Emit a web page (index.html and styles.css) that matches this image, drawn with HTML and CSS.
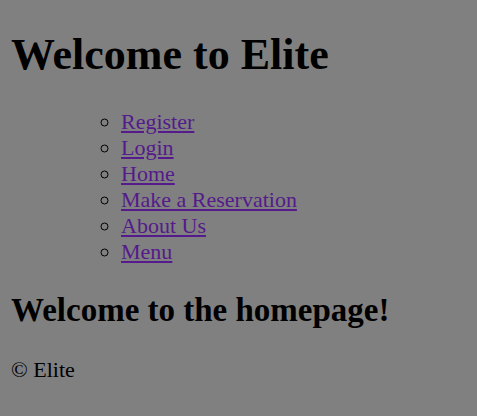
FILE: index.html
```html
<!DOCTYPE html>
<html>
<head>
<meta charset="utf-8">
<title>Elite</title>
<link rel="stylesheet" href="styles.css">
</head>
<body class="page">
<h1 class="title">Welcome to Elite</h1>
<ul class="nav">
  <ul class="nav-inner">
    <li><a href="#" class="link">Register</a></li>
    <li><a href="#" class="link">Login</a></li>
    <li><a href="#" class="link">Home</a></li>
    <li><a href="#" class="link">Make a Reservation</a></li>
    <li><a href="#" class="link">About Us</a></li>
    <li><a href="#" class="link">Menu</a></li>
  </ul>
</ul>
<h2 class="subtitle">Welcome to the homepage!</h2>
<p class="footer">© Elite</p>
</body>
</html>
```
FILE: styles.css
```css
html {
  background: #808080;
}
.page {
  margin: 11px;
  font-family: "Liberation Serif", "Times New Roman", serif;
  font-size: 22px;
  color: #000;
  background: #808080;
}
.title {
  font-size: 44px;
  font-weight: bold;
  margin: 17.5px 0 29.5px;
}
.nav {
  margin: 22px 0;
  padding-left: 55px;
  list-style: circle;
}
.nav-inner {
  margin: 0;
  padding-left: 55px;
  list-style: circle;
}
.link {
  color: #551a8b;
}
.subtitle {
  font-size: 33px;
  font-weight: bold;
  margin: 27.4px 0;
}
.footer {
  margin: 22px 0;
}
```
